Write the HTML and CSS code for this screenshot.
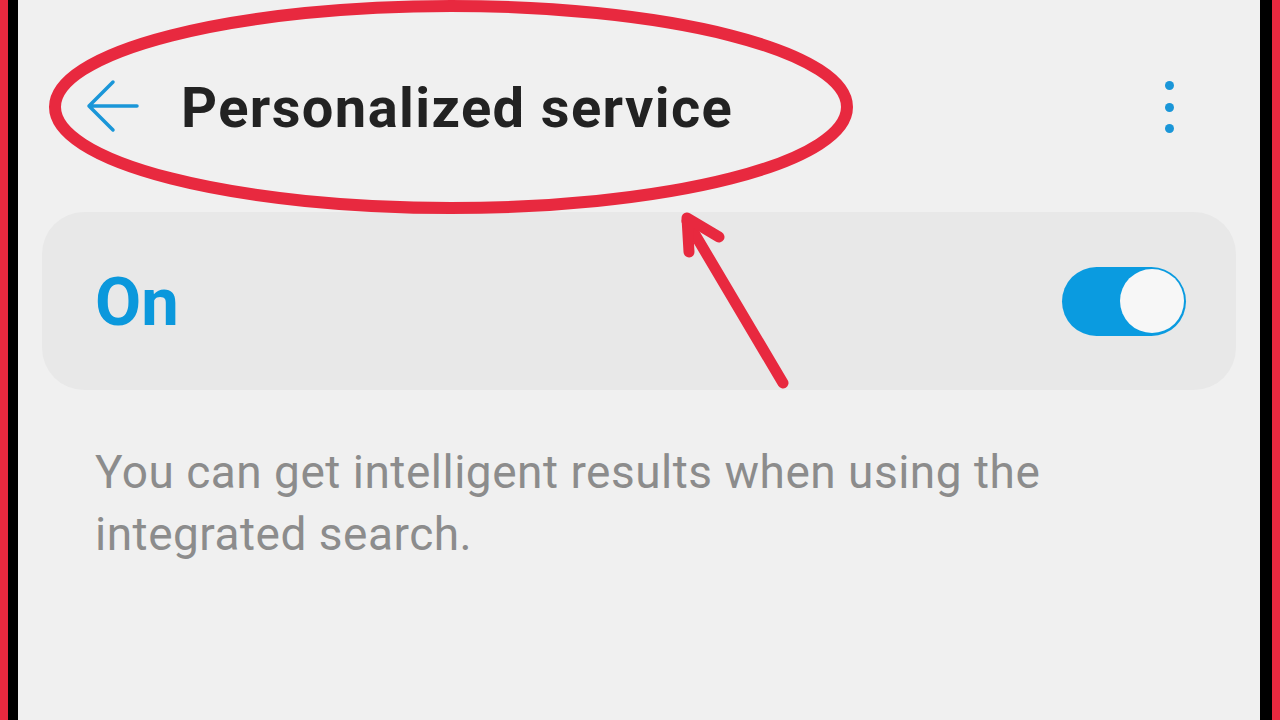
FILE: index.html
```html
<!DOCTYPE html>
<html lang="en">
<head>
<meta charset="utf-8">
<title>Personalized service</title>
<link rel="stylesheet" href="styles.css">
</head>
<body>
<div class="frame">
  <div class="screen">
    <header class="appbar">
      <svg class="back" width="54" height="54" viewBox="0 0 54 54" aria-hidden="true">
        <path d="M3 27 H51 M3 27 L27 3 M3 27 L27 51" fill="none" stroke="#1a96d8" stroke-width="3.5" stroke-linecap="round" stroke-linejoin="round"/>
      </svg>
      <h1 class="title">Personalized service</h1>
      <div class="more" aria-label="More">
        <span class="dot"></span><span class="dot"></span><span class="dot"></span>
      </div>
    </header>
    <section class="card">
      <span class="on">On</span>
      <span class="switch"><span class="knob"></span></span>
    </section>
    <p class="desc">You can get intelligent results when using the integrated search.</p>
  </div>
</div>
<svg class="annot" width="1280" height="720" viewBox="0 0 1280 720" aria-hidden="true">
  <ellipse cx="451" cy="107" rx="396" ry="101" fill="none" stroke="#e8293f" stroke-width="12"/>
  <path d="M687 221 L783 383" fill="none" stroke="#e8293f" stroke-width="11" stroke-linecap="round"/>
  <path d="M689 252 L687 218 L719 237" fill="none" stroke="#e8293f" stroke-width="11" stroke-linecap="round" stroke-linejoin="round"/>
</svg>
</body>
</html>
```
FILE: styles.css
```css
html, body {
  margin: 0;
  padding: 0;
}
body {
  width: 1280px;
  height: 720px;
  overflow: hidden;
  background: #e8293f;
  padding: 0 8px;
  box-sizing: border-box;
  position: relative;
  font-family: Roboto, "Noto Sans", "Liberation Sans", sans-serif;
}
.frame {
  height: 720px;
  background: #000;
  padding: 0 12px 0 10px;
  box-sizing: border-box;
}
.screen {
  height: 720px;
  background: #f0f0f0;
  display: flex;
  flex-direction: column;
  padding: 0 24px;
}
.appbar {
  height: 212px;
  display: flex;
  align-items: center;
  padding-left: 44px;
  padding-right: 62px;
}
.back {
  flex: none;
  margin-right: 41px;
}
.title {
  margin: 0;
  flex: 1;
  font-size: 56px;
  font-weight: 700;
  color: #222;
  letter-spacing: 1.4px;
  margin-top: 4px;
}
.more {
  display: flex;
  flex-direction: column;
  gap: 12.5px;
  align-items: center;
  margin-top: 2px;
}
.dot {
  width: 9px;
  height: 9px;
  border-radius: 50%;
  background: #1a96d8;
}
.card {
  height: 178px;
  background: #e8e8e8;
  border-radius: 42px;
  display: flex;
  align-items: center;
  justify-content: space-between;
  padding: 0 50px 0 53px;
}
.on {
  font-size: 67px;
  font-weight: 700;
  color: #0b98dc;
  margin-top: 2px;
}
.switch {
  width: 124px;
  height: 69px;
  border-radius: 35px;
  background: #0a9be0;
  display: flex;
  align-items: center;
  justify-content: flex-end;
  padding: 0 2px;
  box-sizing: border-box;
}
.knob {
  width: 64px;
  height: 64px;
  border-radius: 50%;
  background: #f7f7f7;
}
.desc {
  margin: 51px 0 0 0;
  padding-left: 53px;
  font-size: 46px;
  line-height: 62px;
  letter-spacing: 0.5px;
  color: #8c8c8c;
  max-width: 1000px;
}
.annot {
  position: absolute;
  left: 0;
  top: 0;
  pointer-events: none;
}
```
